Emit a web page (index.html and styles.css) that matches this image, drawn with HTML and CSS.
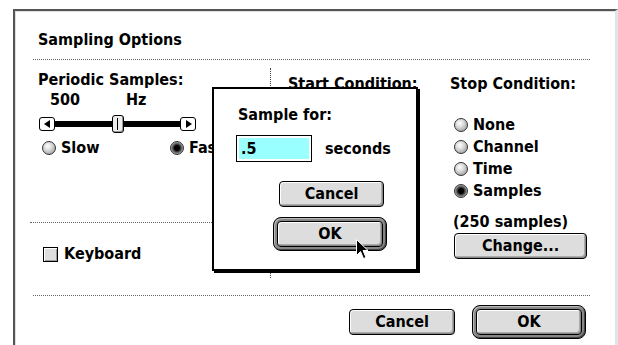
FILE: index.html
```html
<!DOCTYPE html>
<html lang="en">

<head>
    <meta charset="UTF-8">
    <title>Sampling Options</title>
    <link rel="stylesheet" href="styles.css">
</head>

<body>
    <div class="window">
        <div class="title">Sampling Options</div>
        <div class="rule"></div>

        <div class="main">
            <div class="col-left">
                <div class="label">Periodic Samples:</div>
                <div class="rate"><span class="rate-num">500</span><span class="rate-unit">Hz</span></div>
                <div class="slider">
                    <div class="arrow-box arrow-left"></div>
                    <div class="track"></div>
                    <div class="thumb"></div>
                    <div class="track"></div>
                    <div class="arrow-box arrow-right"></div>
                </div>
                <div class="speed">
                    <div class="radio-item slow"><span class="radio"></span>Slow</div>
                    <div class="radio-item"><span class="radio on"></span>Fast</div>
                </div>
                <div class="rule rule-left"></div>
                <div class="check-item"><span class="checkbox"></span>Keyboard</div>
            </div>

            <div class="separator"></div>

            <div class="col-mid">
                <div class="label">Start Condition:</div>
            </div>

            <div class="col-right">
                <div class="label">Stop Condition:</div>
                <div class="radio-list">
                    <div class="radio-item"><span class="radio"></span>None</div>
                    <div class="radio-item"><span class="radio"></span>Channel</div>
                    <div class="radio-item"><span class="radio"></span>Time</div>
                    <div class="radio-item"><span class="radio on"></span>Samples</div>
                </div>
                <div class="count">(250 samples)</div>
                <div class="btn btn-change">Change...</div>
            </div>
        </div>

        <div class="rule"></div>
        <div class="actions">
            <div class="btn">Cancel</div>
            <div class="ring"><div class="btn">OK</div></div>
        </div>
    </div>

    <div class="dialog">
        <div class="label">Sample for:</div>
        <div class="field-row">
            <div class="field"><div class="field-fill">.5</div></div>
            <span class="unit">seconds</span>
        </div>
        <div class="btn dlg-cancel">Cancel</div>
        <div class="ring dlg-ok"><div class="btn">OK</div></div>
    </div>

    <svg class="cursor" width="13" height="20" viewBox="0 0 13 20">
        <path d="M0.5 0.5 L0.5 16.5 L4.5 12.5 L7.5 19.5 L10 18.5 L7 11.5 L12 11.5 Z" fill="#000" stroke="#fff" stroke-width="1"/>
    </svg>
</body>

</html>
```

FILE: styles.css
```css
body {
    margin: 0;
    background: #fff;
    overflow: hidden;
    font-family: "DejaVu Sans Condensed", "DejaVu Sans", sans-serif;
    font-stretch: condensed;
    font-weight: bold;
    font-size: 16px;
    line-height: 20px;
    color: #000;
}

.window {
    margin: 9px 0 0 13px;
    width: 557px;
    height: 316px;
    padding: 19px 25px 0 18px;
    border-top: 2px solid #555;
    border-left: 2px solid #555;
    border-right: 3px solid #e4e4e4;
    box-shadow: inset 1px 1px 0 #ddd;
}

.title {
    padding-left: 5px;
}

.rule {
    border-top: 1px dotted #666;
    margin-top: 9px;
}

.main {
    display: grid;
    grid-template-columns: 237px 1px 179px 1fr;
    height: 226px;
}

/* left column */
.col-left {
    padding-top: 10px;
}

.col-left .label {
    padding-left: 5px;
}

.rate {
    padding-left: 17px;
}

.rate-unit {
    margin-left: 46px;
}

.slider {
    display: flex;
    align-items: center;
    height: 18px;
    margin: 5px 0 0 6px;
    width: 157px;
}

.arrow-box {
    position: relative;
    width: 16px;
    height: 14px;
    box-sizing: border-box;
    border: 1px solid #000;
    border-radius: 3px;
    background: #fff;
}

.arrow-box::after {
    content: "";
    position: absolute;
    top: 2px;
    border-top: 4px solid transparent;
    border-bottom: 4px solid transparent;
}

.arrow-left::after {
    left: 4px;
    border-right: 6px solid #000;
}

.arrow-right::after {
    left: 5px;
    border-left: 6px solid #000;
}

.track {
    flex: 1;
    height: 6px;
    background: #000;
}

.thumb {
    position: relative;
    width: 12px;
    height: 18px;
    box-sizing: border-box;
    border: 1px solid #000;
    border-radius: 3px;
    background: #eee;
    box-shadow: inset -1px -1px 0 #999;
}

.thumb::after {
    content: "";
    position: absolute;
    left: 4px;
    top: 2px;
    width: 1px;
    height: 12px;
    background: #000;
}

.speed {
    display: flex;
    margin: 5px 0 0 9px;
}

.slow {
    width: 128px;
}

.rule-left {
    margin: 64px 0 0 -3px;
}

.check-item {
    display: flex;
    align-items: center;
    margin: 21px 0 0 10px;
}

.checkbox {
    width: 15px;
    height: 15px;
    box-sizing: border-box;
    margin-right: 6px;
    border: 1px solid #000;
    background: #ddd;
    box-shadow: inset 1px 1px 0 #fff, inset -1px -1px 0 #999;
}

/* radios */
.radio-item {
    display: flex;
    align-items: center;
    height: 20px;
}

.radio {
    width: 14px;
    height: 14px;
    box-sizing: border-box;
    margin-right: 5px;
    border: 1px solid #333;
    border-radius: 50%;
    background: radial-gradient(circle at 40% 35%, #fff 0, #ddd 35%, #888 100%);
}

.radio.on {
    background: radial-gradient(circle, #000 0 2.5px, #333 3.5px, #777 5px, #bbb 6.5px);
}

.separator {
    border-left: 1px dotted #444;
    margin: 8px 0;
}

/* middle column */
.col-mid {
    padding: 14px 0 0 17px;
}

/* right column */
.col-right {
    padding-top: 14px;
}

.radio-list {
    margin: 20px 0 0 4px;
}

.radio-list .radio-item {
    height: 22px;
}

.count {
    margin: 10px 0 0 3px;
}

/* buttons */
.btn {
    width: 106px;
    height: 26px;
    box-sizing: border-box;
    border: 1px solid #000;
    border-radius: 4px;
    background: #ddd;
    box-shadow: inset 1px 1px 0 #fff, inset -1px -1px 0 #888, inset -2px -2px 0 #aaa;
    text-align: center;
    line-height: 24px;
}

.btn-change {
    width: 133px;
    margin: 1px 0 0 4px;
}

.ring {
    width: 114px;
    box-sizing: border-box;
    padding: 3px;
    border: 1px solid #000;
    border-radius: 8px;
    background: #888;
    box-shadow: inset 1px 1px 0 #bbb, inset -1px -1px 0 #444;
}

.actions {
    display: flex;
    justify-content: flex-end;
    align-items: center;
    gap: 17px;
    margin: 9px 4px 0 0;
}

/* modal */
.dialog {
    position: absolute;
    left: 212px;
    top: 87px;
    width: 178px;
    height: 164px;
    padding: 16px 0 0 24px;
    border: 2px solid #000;
    box-shadow: 2px 2px 0 #000;
    background: #fff;
}

.field-row {
    display: flex;
    align-items: center;
    margin-top: 10px;
}

.field {
    width: 76px;
    height: 27px;
    box-sizing: border-box;
    margin-left: -2px;
    padding: 2px;
    border: 1px solid #000;
    background: #fff;
}

.field-fill {
    height: 21px;
    padding-left: 2px;
    background: #9ff;
    line-height: 22px;
}

.unit {
    margin-left: 13px;
}

.dlg-cancel {
    width: 105px;
    margin: 19px 0 0 41px;
}

.dlg-ok {
    margin: 10px 0 0 35px;
}

.cursor {
    position: absolute;
    left: 356px;
    top: 239px;
}
```
